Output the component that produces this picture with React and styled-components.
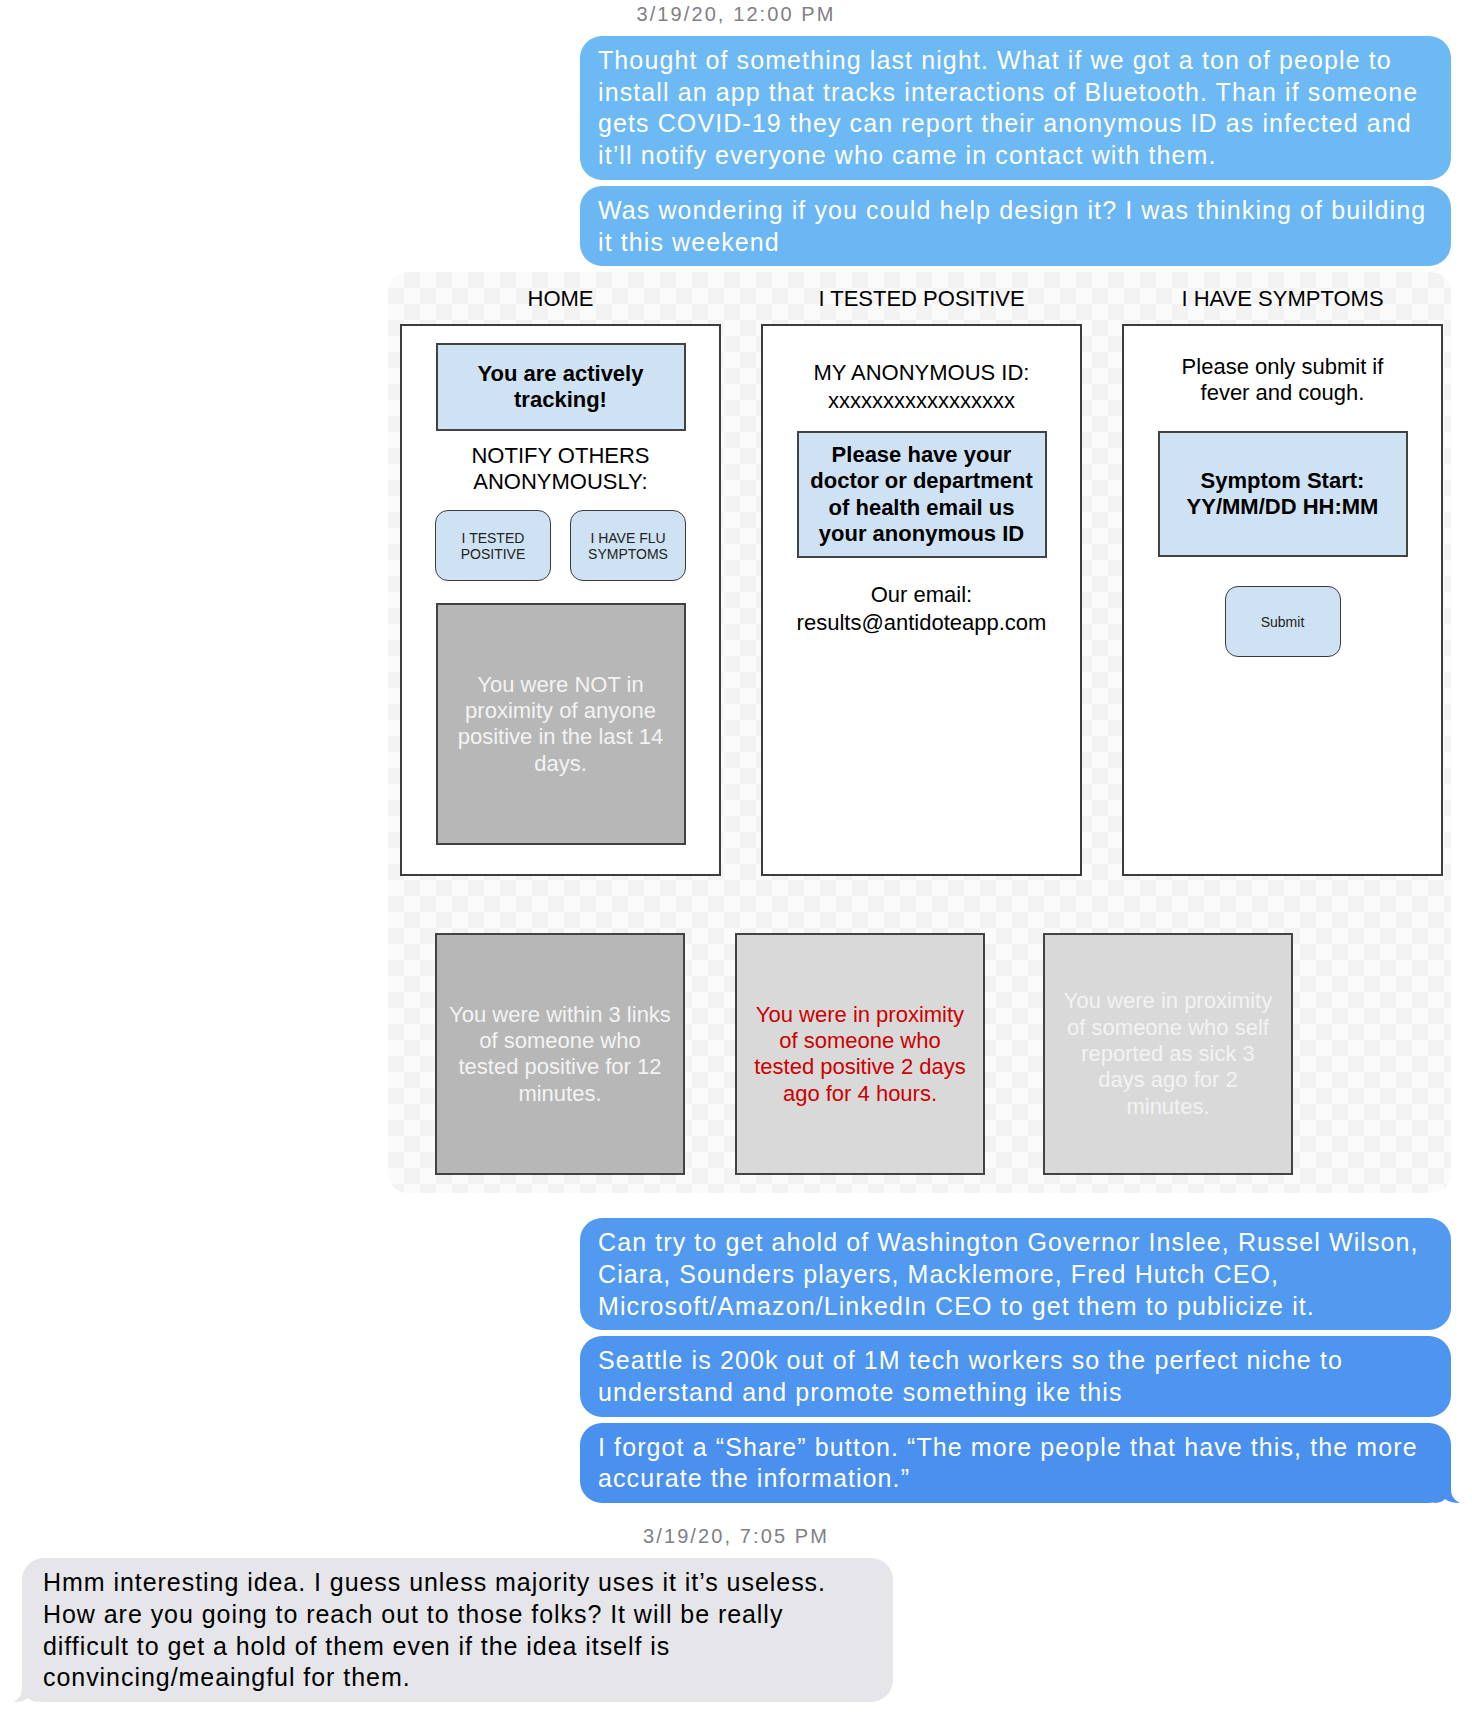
import React from "react";
import styled, { createGlobalStyle } from "styled-components";

const GlobalStyle = createGlobalStyle`
  body {
    margin: 0;
    background: #ffffff;
    font-family: "Liberation Sans", Arial, sans-serif;
  }
`;

const MSG = {
  idea:
    "Thought of something last night. What if we got a ton of people to\ninstall an app that tracks interactions of Bluetooth. Than if someone\ngets COVID-19 they can report their anonymous ID as infected and\nit\u2019ll notify everyone who came in contact with them.",
  help: "Was wondering if you could help design it? I was thinking of building\nit this weekend",
  ahold:
    "Can try to get ahold of Washington Governor Inslee, Russel Wilson,\nCiara, Sounders players, Macklemore, Fred Hutch CEO,\nMicrosoft/Amazon/LinkedIn CEO to get them to publicize it.",
  seattle: "Seattle is 200k out of 1M tech workers so the perfect niche to\nunderstand and promote something ike this",
  share:
    "I forgot a \u201cShare\u201d button. \u201cThe more people that have this, the more\naccurate the information.\u201d",
  reply:
    "Hmm interesting idea. I guess unless majority uses it it\u2019s useless.\nHow are you going to reach out to those folks? It will be really\ndifficult to get a hold of them even if the idea itself is\nconvincing/meaingful for them.",
};

function App() {
  return (
    <>
      <GlobalStyle />
      <Page>
        <Timestamp>3/19/20, 12:00 PM</Timestamp>

        <Group>
          <Bubble $bg="#6cb9f4">{MSG.idea}</Bubble>
          <Bubble $bg="#6ab7f3">{MSG.help}</Bubble>

          {/* the mockup picture that was sent */}
          <Sketch>
            <Screens>
              <ScreenTitle>HOME</ScreenTitle>
              <ScreenTitle>I TESTED POSITIVE</ScreenTitle>
              <ScreenTitle>I HAVE SYMPTOMS</ScreenTitle>

              <Screen $top={17}>
                <InfoBox $h={88}>{"You are actively\ntracking!"}</InfoBox>
                <Caption $mt={12}>{"NOTIFY OTHERS\nANONYMOUSLY:"}</Caption>
                <ButtonRow>
                  <PillButton>{"I TESTED\nPOSITIVE"}</PillButton>
                  <PillButton>{"I HAVE FLU\nSYMPTOMS"}</PillButton>
                </ButtonRow>
                <StatusCard $bg="#b7b7b7" $color="#f3f3f3">
                  {"You were NOT in\nproximity of anyone\npositive in the last 14\ndays."}
                </StatusCard>
              </Screen>

              <Screen $top={33}>
                <Caption $lh={28}>{"MY ANONYMOUS ID:\nxxxxxxxxxxxxxxxxx"}</Caption>
                <InfoBox $h={127} $mt={16}>
                  {"Please have your\ndoctor or department\nof health email us\nyour anonymous ID"}
                </InfoBox>
                <Caption $mt={23} $lh={28}>{"Our email:\nresults@antidoteapp.com"}</Caption>
              </Screen>

              <Screen $top={28}>
                <Caption>{"Please only submit if\nfever and cough."}</Caption>
                <InfoBox $h={126} $mt={25}>{"Symptom Start:\nYY/MM/DD HH:MM"}</InfoBox>
                <PillButton $mt={29}>Submit</PillButton>
              </Screen>
            </Screens>

            <CardRow>
              <StatusCard $bg="#b7b7b7" $color="#f3f3f3">
                {"You were within 3 links\nof someone who\ntested positive for 12\nminutes."}
              </StatusCard>
              <StatusCard $bg="#d9d9d9" $color="#cc0000">
                {"You were in proximity\nof someone who\ntested positive 2 days\nago for 4 hours."}
              </StatusCard>
              <StatusCard $bg="#d9d9d9" $color="#f3f3f3" $ml={8}>
                {"You were in proximity\nof someone who self\nreported as sick 3\ndays ago for 2\nminutes."}
              </StatusCard>
            </CardRow>
          </Sketch>

          <Bubble $bg="#519af0" $first>{MSG.ahold}</Bubble>
          <Bubble $bg="#4d95ef">{MSG.seattle}</Bubble>
          <Bubble $bg="#4a90ee">
            {MSG.share}
            <Tail viewBox="0 0 26 26" $side="right">
              <path d="M0 0H17V12C17 19 20 23 26 26C20 26 15 25 11 22C8 25 4 26 0 26Z" fill="#4a90ee" />
            </Tail>
          </Bubble>
        </Group>

        <Timestamp $mt={21}>3/19/20, 7:05 PM</Timestamp>

        <Group $incoming>
          <Bubble $bg="#e5e5ea" $incoming>
            {MSG.reply}
            <Tail viewBox="0 0 26 26" $side="left">
              <path d="M26 0H9V12C9 19 6 23 0 26C6 26 11 25 15 22C18 25 22 26 26 26Z" fill="#e5e5ea" />
            </Tail>
          </Bubble>
        </Group>
      </Page>
    </>
  );
}

export default App;

const Page = styled.div`
  width: 1472px;
  min-height: 1712px;
  padding-top: 2px;
  box-sizing: border-box;
  display: flex;
  flex-direction: column;
`;

const Timestamp = styled.div`
  text-align: center;
  font-size: 20px;
  line-height: 24px;
  letter-spacing: 2.1px;
  color: #808085;
  margin-top: ${(p) => p.$mt || 0}px;
  margin-bottom: 10px;
`;

const Group = styled.div`
  display: flex;
  flex-direction: column;
  gap: 6px;
  align-items: ${(p) => (p.$incoming ? "flex-start" : "flex-end")};
  padding: ${(p) => (p.$incoming ? "0 0 0 22px" : "0 21px 0 0")};
`;

const Bubble = styled.div`
  position: relative;
  width: 871px;
  box-sizing: border-box;
  padding: 9px 16px 8px ${(p) => (p.$incoming ? 21 : 18)}px;
  margin-top: ${(p) => (p.$first ? 19 : 0)}px;
  border-radius: 22px;
  background: ${(p) => p.$bg};
  color: ${(p) => (p.$incoming ? "#000000" : "#ffffff")};
  font-size: 25px;
  line-height: 31.7px;
  letter-spacing: ${(p) => (p.$incoming ? 0.95 : 1.1)}px;
  white-space: pre;
`;

const Tail = styled.svg`
  position: absolute;
  bottom: 0;
  width: 26px;
  height: 26px;
  ${(p) => (p.$side === "right" ? "right: -9px;" : "left: -9px;")}
`;

const Sketch = styled.div`
  width: 1063px;
  box-sizing: border-box;
  padding: 14px 0 18px 12px;
  border-radius: 20px;
  background: repeating-conic-gradient(#f3f3f3 0 25%, #fbfbfb 0 50%) 0 0 / 32px 32px;
  color: #000000;
  font-family: "Liberation Sans", Arial, sans-serif;
`;

const Screens = styled.div`
  display: grid;
  grid-template-columns: repeat(3, 321px);
  column-gap: 40px;
  row-gap: 12px;
`;

const ScreenTitle = styled.div`
  text-align: center;
  font-size: 22px;
  line-height: 26px;
`;

const Screen = styled.div`
  height: 552px;
  box-sizing: border-box;
  border: 2px solid #3c3c3c;
  background: #ffffff;
  padding-top: ${(p) => p.$top}px;
  display: flex;
  flex-direction: column;
  align-items: center;
`;

const InfoBox = styled.div`
  width: 250px;
  height: ${(p) => p.$h}px;
  margin-top: ${(p) => p.$mt || 0}px;
  box-sizing: border-box;
  border: 2px solid #434343;
  background: #cfe2f3;
  display: flex;
  align-items: center;
  justify-content: center;
  text-align: center;
  white-space: pre;
  font-size: 22px;
  font-weight: 700;
  line-height: 26.5px;
`;

const Caption = styled.div`
  margin-top: ${(p) => p.$mt || 0}px;
  text-align: center;
  white-space: pre;
  font-size: 22px;
  line-height: ${(p) => p.$lh || 26}px;
`;

const ButtonRow = styled.div`
  display: flex;
  gap: 19px;
  margin: 15px 0 22px;
`;

const PillButton = styled.div`
  width: 116px;
  height: 71px;
  margin-top: ${(p) => p.$mt || 0}px;
  box-sizing: border-box;
  border: 1.5px solid #3c3c3c;
  border-radius: 13px;
  background: #cfe2f3;
  display: flex;
  align-items: center;
  justify-content: center;
  text-align: center;
  white-space: pre;
  font-size: 14px;
  line-height: 16px;
  color: #222222;
`;

const CardRow = styled.div`
  display: flex;
  gap: 50px;
  padding-left: 35px;
  margin-top: 57px;
`;

const StatusCard = styled.div`
  width: 250px;
  height: 242px;
  margin-left: ${(p) => p.$ml || 0}px;
  box-sizing: border-box;
  border: 2px solid #434343;
  background: ${(p) => p.$bg};
  color: ${(p) => p.$color};
  display: flex;
  align-items: center;
  justify-content: center;
  text-align: center;
  white-space: pre;
  font-size: 22px;
  line-height: 26.3px;
`;
